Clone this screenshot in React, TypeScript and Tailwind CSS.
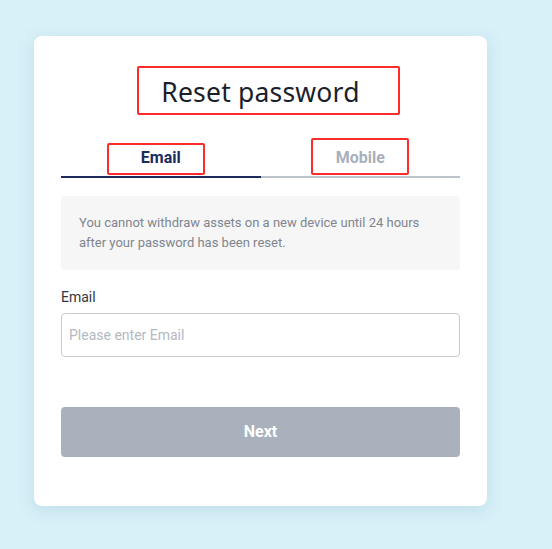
import { useState } from "react";

export default function App() {
  const [tab, setTab] = useState<"email" | "mobile">("email");

  return (
    <div
      className="min-h-[549px] w-full bg-[#d8f0f8] pl-[34px] pt-[36px]"
      style={{ fontFamily: "Roboto, 'Noto Sans', sans-serif" }}
    >
      <div className="relative w-[453px] h-[470px] rounded-[8px] bg-white px-[27px] shadow-[0_4px_16px_rgba(120,170,190,0.25)]">
        {/* Title */}
        <div className="pt-[36px] h-[100px] text-center">
          <h1
            className="text-[26.5px] leading-[40px] font-normal text-[#1b1f2b] tracking-[0.2px]"
            style={{ fontFamily: "'Noto Sans', 'Open Sans', sans-serif" }}
          >
            Reset password
          </h1>
        </div>

        {/* Tabs */}
        <div className="flex h-[42px]">
          {[
            { key: "email" as const, label: "Email" },
            { key: "mobile" as const, label: "Mobile" },
          ].map(({ key, label }) => (
            <button
              key={key}
              onClick={() => setTab(key)}
              className={
                tab === key
                  ? "flex-1 flex items-center justify-center pt-[4px] border-b-2 border-[#1c2a5c] text-[16px] font-bold text-[#1c2a5c]"
                  : "flex-1 flex items-center justify-center pt-[4px] border-b-2 border-[#bcc2ca] text-[16px] font-bold text-[#a8b0bc]"
              }
            >
              {label}
            </button>
          ))}
        </div>

        {/* Notice */}
        <div className="mt-[18px] rounded-[4px] bg-[#f6f6f7] px-[18px] py-[17px] text-[13px] leading-[20px] text-[#80858e]">
          You cannot withdraw assets on a new device until 24 hours
          <br />
          after your password has been reset.
        </div>

        {/* Email field */}
        <div className="mt-[17px] text-[14px] leading-[20px] text-[#333740]">Email</div>
        <input
          className="mt-[6px] block w-full h-[44px] rounded-[4px] border border-[#c7ccd3] px-[7px] text-[14px] text-[#333] placeholder:text-[#b3b9c2] outline-none"
          placeholder="Please enter Email"
        />

        <button className="mt-[50px] block w-full h-[50px] rounded-[4px] bg-[#a8b1bc] text-[16px] font-bold text-white">
          Next
        </button>

        {/* Annotation boxes */}
        <div className="pointer-events-none absolute left-[103px] top-[30px] w-[263px] h-[49px] rounded-[2px] border-2 border-[#ff2b2b]" />
        <div className="pointer-events-none absolute left-[73px] top-[107px] w-[98px] h-[32px] rounded-[2px] border-2 border-[#ff2b2b]" />
        <div className="pointer-events-none absolute left-[277px] top-[102px] w-[98px] h-[37px] rounded-[2px] border-2 border-[#ff2b2b]" />
      </div>
    </div>
  );
}
